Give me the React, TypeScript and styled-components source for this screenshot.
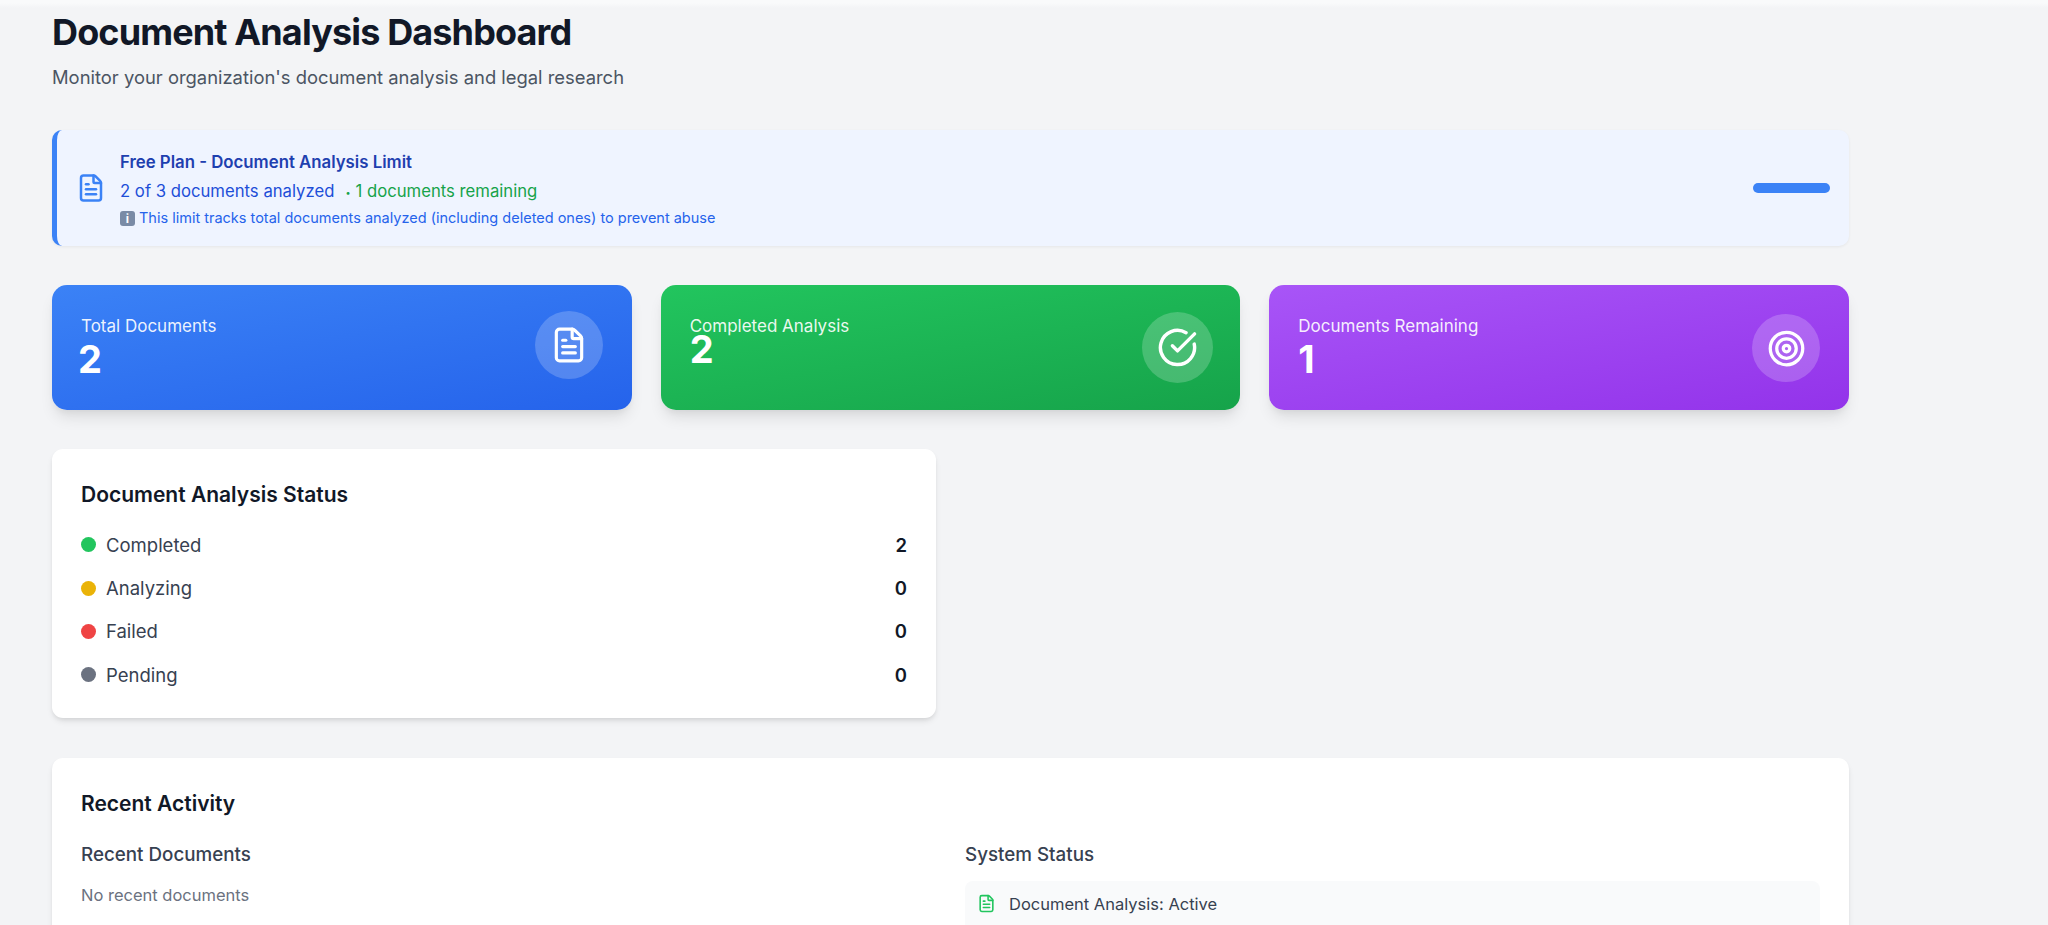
import React from 'react';
import styled, {createGlobalStyle} from 'styled-components';
import {FileText, CircleCheckBig, Target} from 'lucide-react';

const GlobalStyle = createGlobalStyle`
  html, body {
    margin: 0;
    height: 925px;
    overflow: hidden;
    background: linear-gradient(#f9fafb 0, #f9fafb 3px, #f3f4f6 8px);
    font-family: Inter, "Liberation Sans", sans-serif;
  }
`

const Page = styled.div`
  width: 1797px;
  padding: 12px 0 0 52px;
  display: flex;
  flex-direction: column;
`

const Title = styled.h1`
  margin: 0;
  font-size: 36px;
  line-height: 40px;
  font-weight: 700;
  letter-spacing: -0.024em;
  color: #111827;
`

const Subtitle = styled.p`
  margin: 13px 0 0;
  font-size: 18.4px;
  line-height: 24px;
  color: #4b5563;
`

const Banner = styled.section`
  margin-top: 41px;
  height: 116px;
  box-sizing: border-box;
  display: flex;
  align-items: center;
  padding: 0 19px 0 19px;
  background: #eff4ff;
  border-left: 5px solid #3b82f6;
  border-radius: 10px;
  box-shadow: 0 1px 3px rgba(0, 0, 0, 0.06);
  color: #3b82f6;
`

const BannerText = styled.div`
  flex: 1;
  margin: 3px 0 0 14px;
`

const BannerTitle = styled.div`
  font-size: 16.8px;
  line-height: 24px;
  font-weight: 600;
  color: #1e40af;
`

const BannerUsage = styled.div`
  margin-top: 5px;
  font-size: 16.7px;
  line-height: 24px;
  color: #1d4ed8;
`

const Remaining = styled.span`
  margin-left: 11px;
  font-size: 16.7px;
  color: #16a34a;
`

const Bullet = styled.span`
  margin-right: 5px;
  font-size: 9px;
  vertical-align: 1px;
`

const BannerNote = styled.div`
  margin-top: 2px;
  font-size: 14.5px;
  line-height: 22px;
  color: #2563eb;
  display: flex;
  align-items: center;
  gap: 4px;
`

const InfoGlyph = styled.span`
  width: 15px;
  height: 15px;
  border-radius: 3px;
  background: #7a8ba6;
  color: #fff;
  font-size: 12px;
  font-weight: 700;
  line-height: 15px;
  text-align: center;
`

const Progress = styled.div`
  width: 77px;
  height: 10px;
  border-radius: 5px;
  background: #3b82f6;
`

const Stats = styled.div`
  margin-top: 39px;
  display: grid;
  grid-template-columns: repeat(3, 1fr);
  gap: 29px;
`

const gradients = {
  blue: 'linear-gradient(170deg, #3b82f6, #2563eb)',
  green: 'linear-gradient(170deg, #22c55e, #16a34a)',
  purple: 'linear-gradient(170deg, #a855f7, #9333ea)',
}

const StatCard = styled.div<{$tone: keyof typeof gradients}>`
  height: 125px;
  box-sizing: border-box;
  padding: 0 29px;
  display: flex;
  align-items: flex-start;
  justify-content: space-between;
  border-radius: 15px;
  background: ${p => gradients[p.$tone]};
  color: #fff;
  box-shadow: 0 10px 15px -3px rgba(0, 0, 0, 0.1), 0 4px 6px -2px rgba(0, 0, 0, 0.05);
`

const StatLabel = styled.div`
  margin-top: 30px;
  font-size: 17px;
  line-height: 22px;
  color: rgba(255, 255, 255, 0.92);
`

const StatValue = styled.div<{$lift: number; $nudge: number}>`
  margin: ${p => 2 - p.$lift}px 0 0 ${p => p.$nudge}px;
  font-size: 38px;
  line-height: 40px;
  font-weight: 700;
`

const IconCircle = styled.div<{$size: number; $top: number; $right: number}>`
  width: ${p => p.$size}px;
  height: ${p => p.$size}px;
  margin: ${p => p.$top}px ${p => p.$right}px 0 0;
  display: flex;
  align-items: center;
  justify-content: center;
  border-radius: 50%;
  background: rgba(255, 255, 255, 0.2);
`

const Panels = styled.div`
  margin-top: 39px;
  display: grid;
  grid-template-columns: repeat(2, 1fr);
  gap: 29px;
`

const Panel = styled.section`
  background: #fff;
  border-radius: 11px;
  padding: 28px 29px 20px;
  box-sizing: border-box;
  box-shadow: 0 4px 6px -1px rgba(0, 0, 0, 0.1), 0 2px 4px -1px rgba(0, 0, 0, 0.06);
`

const PanelTitle = styled.h2`
  margin: 0;
  font-size: 21px;
  line-height: 36px;
  font-weight: 600;
  color: #111827;
`

const StatusList = styled.ul`
  margin: 10px 0 0;
  padding: 0 0 1px;
  list-style: none;
`

const StatusRow = styled.li`
  height: 43.4px;
  display: flex;
  align-items: center;
  font-size: 18.5px;
  color: #374151;
`

const Dot = styled.span<{$color: string}>`
  width: 15px;
  height: 15px;
  margin-right: 10px;
  border-radius: 50%;
  background: ${p => p.$color};
`

const Count = styled.span`
  margin-left: auto;
  font-weight: 600;
  color: #111827;
`

const RecentPanel = styled(Panel)`
  margin-top: 40px;
  height: 300px;
`

const Columns = styled.div`
  margin-top: 17px;
  display: grid;
  grid-template-columns: repeat(2, 1fr);
  gap: 29px;
`

const ColumnTitle = styled.h3`
  margin: 0;
  font-size: 18.8px;
  line-height: 32px;
  font-weight: 500;
  color: #374151;
`

const Empty = styled.p`
  margin: 8px 0 0;
  font-size: 16.5px;
  line-height: 32px;
  color: #6b7280;
`

const SystemRow = styled.div`
  margin-top: 10px;
  padding: 11px 12px 60px;
  display: flex;
  align-items: flex-start;
  gap: 13px;
  border-radius: 8px;
  background: #f9fafb;
  font-size: 16.5px;
  line-height: 24px;
  color: #374151;
  svg {
    color: #22c55e;
    margin-top: 2px;
  }
`

const statuses = [
  {label: 'Completed', color: '#22c55e', count: 2},
  {label: 'Analyzing', color: '#eab308', count: 0},
  {label: 'Failed', color: '#ef4444', count: 0},
  {label: 'Pending', color: '#6b7280', count: 0},
];

export default function App() {
  return (
    <Page>
      <GlobalStyle/>
      <Title>Document Analysis Dashboard</Title>
      <Subtitle>Monitor your organization's document analysis and legal research</Subtitle>

      <Banner>
        <FileText size={30}/>
        <BannerText>
          <BannerTitle>Free Plan - Document Analysis Limit</BannerTitle>
          <BannerUsage>
            2 of 3 documents analyzed
            <Remaining><Bullet>•</Bullet>1 documents remaining</Remaining>
          </BannerUsage>
          <BannerNote>
            <InfoGlyph>i</InfoGlyph>
            This limit tracks total documents analyzed (including deleted ones) to prevent abuse
          </BannerNote>
        </BannerText>
        <Progress/>
      </Banner>

      <Stats>
        <StatCard $tone="blue">
          <div>
            <StatLabel>Total Documents</StatLabel>
            <StatValue $lift={0} $nudge={-3}>2</StatValue>
          </div>
          <IconCircle $size={68} $top={26} $right={0}><FileText size={38} color="#fff"/></IconCircle>
        </StatCard>
        <StatCard $tone="green">
          <div>
            <StatLabel>Completed Analysis</StatLabel>
            <StatValue $lift={10} $nudge={0}>2</StatValue>
          </div>
          <IconCircle $size={71} $top={27} $right={-2}><CircleCheckBig size={41} color="#fff"/></IconCircle>
        </StatCard>
        <StatCard $tone="purple">
          <div>
            <StatLabel>Documents Remaining</StatLabel>
            <StatValue $lift={0} $nudge={0}>1</StatValue>
          </div>
          <IconCircle $size={68} $top={29} $right={0}><Target size={39} color="#fff"/></IconCircle>
        </StatCard>
      </Stats>

      <Panels>
        <Panel>
          <PanelTitle>Document Analysis Status</PanelTitle>
          <StatusList>
            {statuses.map(s => (
              <StatusRow key={s.label}>
                <Dot $color={s.color}/>
                {s.label}
                <Count>{s.count}</Count>
              </StatusRow>
            ))}
          </StatusList>
        </Panel>
      </Panels>

      <RecentPanel>
        <PanelTitle>Recent Activity</PanelTitle>
        <Columns>
          <div>
            <ColumnTitle>Recent Documents</ColumnTitle>
            <Empty>No recent documents</Empty>
          </div>
          <div>
            <ColumnTitle>System Status</ColumnTitle>
            <SystemRow>
              <FileText size={19}/>
              Document Analysis: Active
            </SystemRow>
          </div>
        </Columns>
      </RecentPanel>
    </Page>
  );
}
